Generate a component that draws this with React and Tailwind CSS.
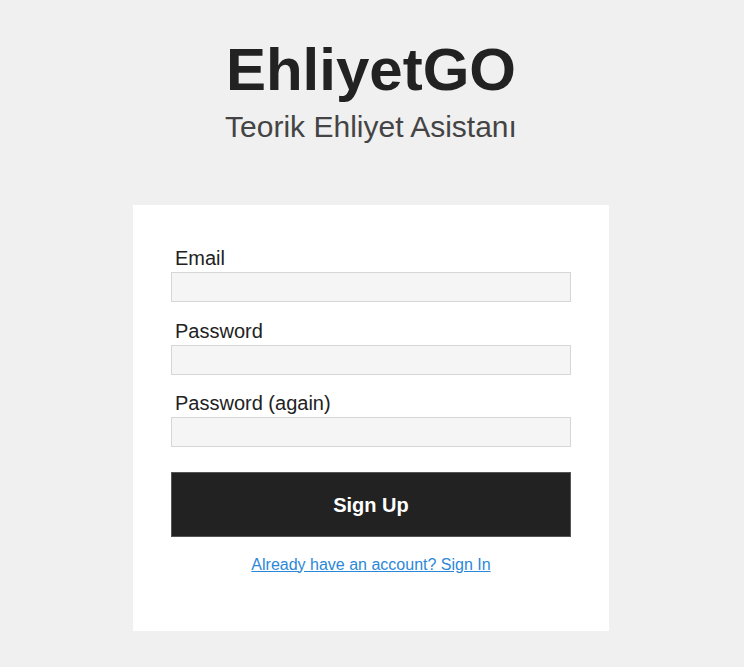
import React from "react";

function Field({ label, type }) {
  return (
    <div className="mb-[16.5px] flex flex-col">
      <label className="pl-[4px] text-[20px] leading-[24px] text-[#222]">{label}</label>
      <input
        type={type}
        className="mt-[2px] h-[30px] w-full border border-[#d6d6d6] bg-[#f5f5f5] outline-none"
      />
    </div>
  );
}

export default function App() {
  return (
    <div
      className="min-h-[667px] w-full bg-[#f0f0f0] flex flex-col items-center"
      style={{ fontFamily: '"Liberation Sans", Arial, sans-serif' }}
    >
      <h1 className="mt-[40px] text-[60px] leading-[60px] font-bold text-[#222] -ml-[2px]">EhliyetGO</h1>
      <p className="mt-[12px] text-[30px] leading-[30px] text-[#444] -ml-[2px]">Teorik Ehliyet Asistanı</p>
      <div className="mt-[63px] w-[476px] -ml-[2px] bg-white px-[38px] pt-[41px] pb-[56px]">
        <Field label="Email" type="email" />
        <Field label="Password" type="password" />
        <Field label="Password (again)" type="password" />
        <button className="mt-[8.5px] h-[65px] w-full border border-[#555] bg-[#222] text-[20px] font-bold text-white">
          Sign Up
        </button>
        <div className="mt-[17.5px] text-center text-[16px] leading-[20px]">
          <a href="#" className="text-[#2b88d8] underline">
            Already have an account? Sign In
          </a>
        </div>
      </div>
    </div>
  );
}
